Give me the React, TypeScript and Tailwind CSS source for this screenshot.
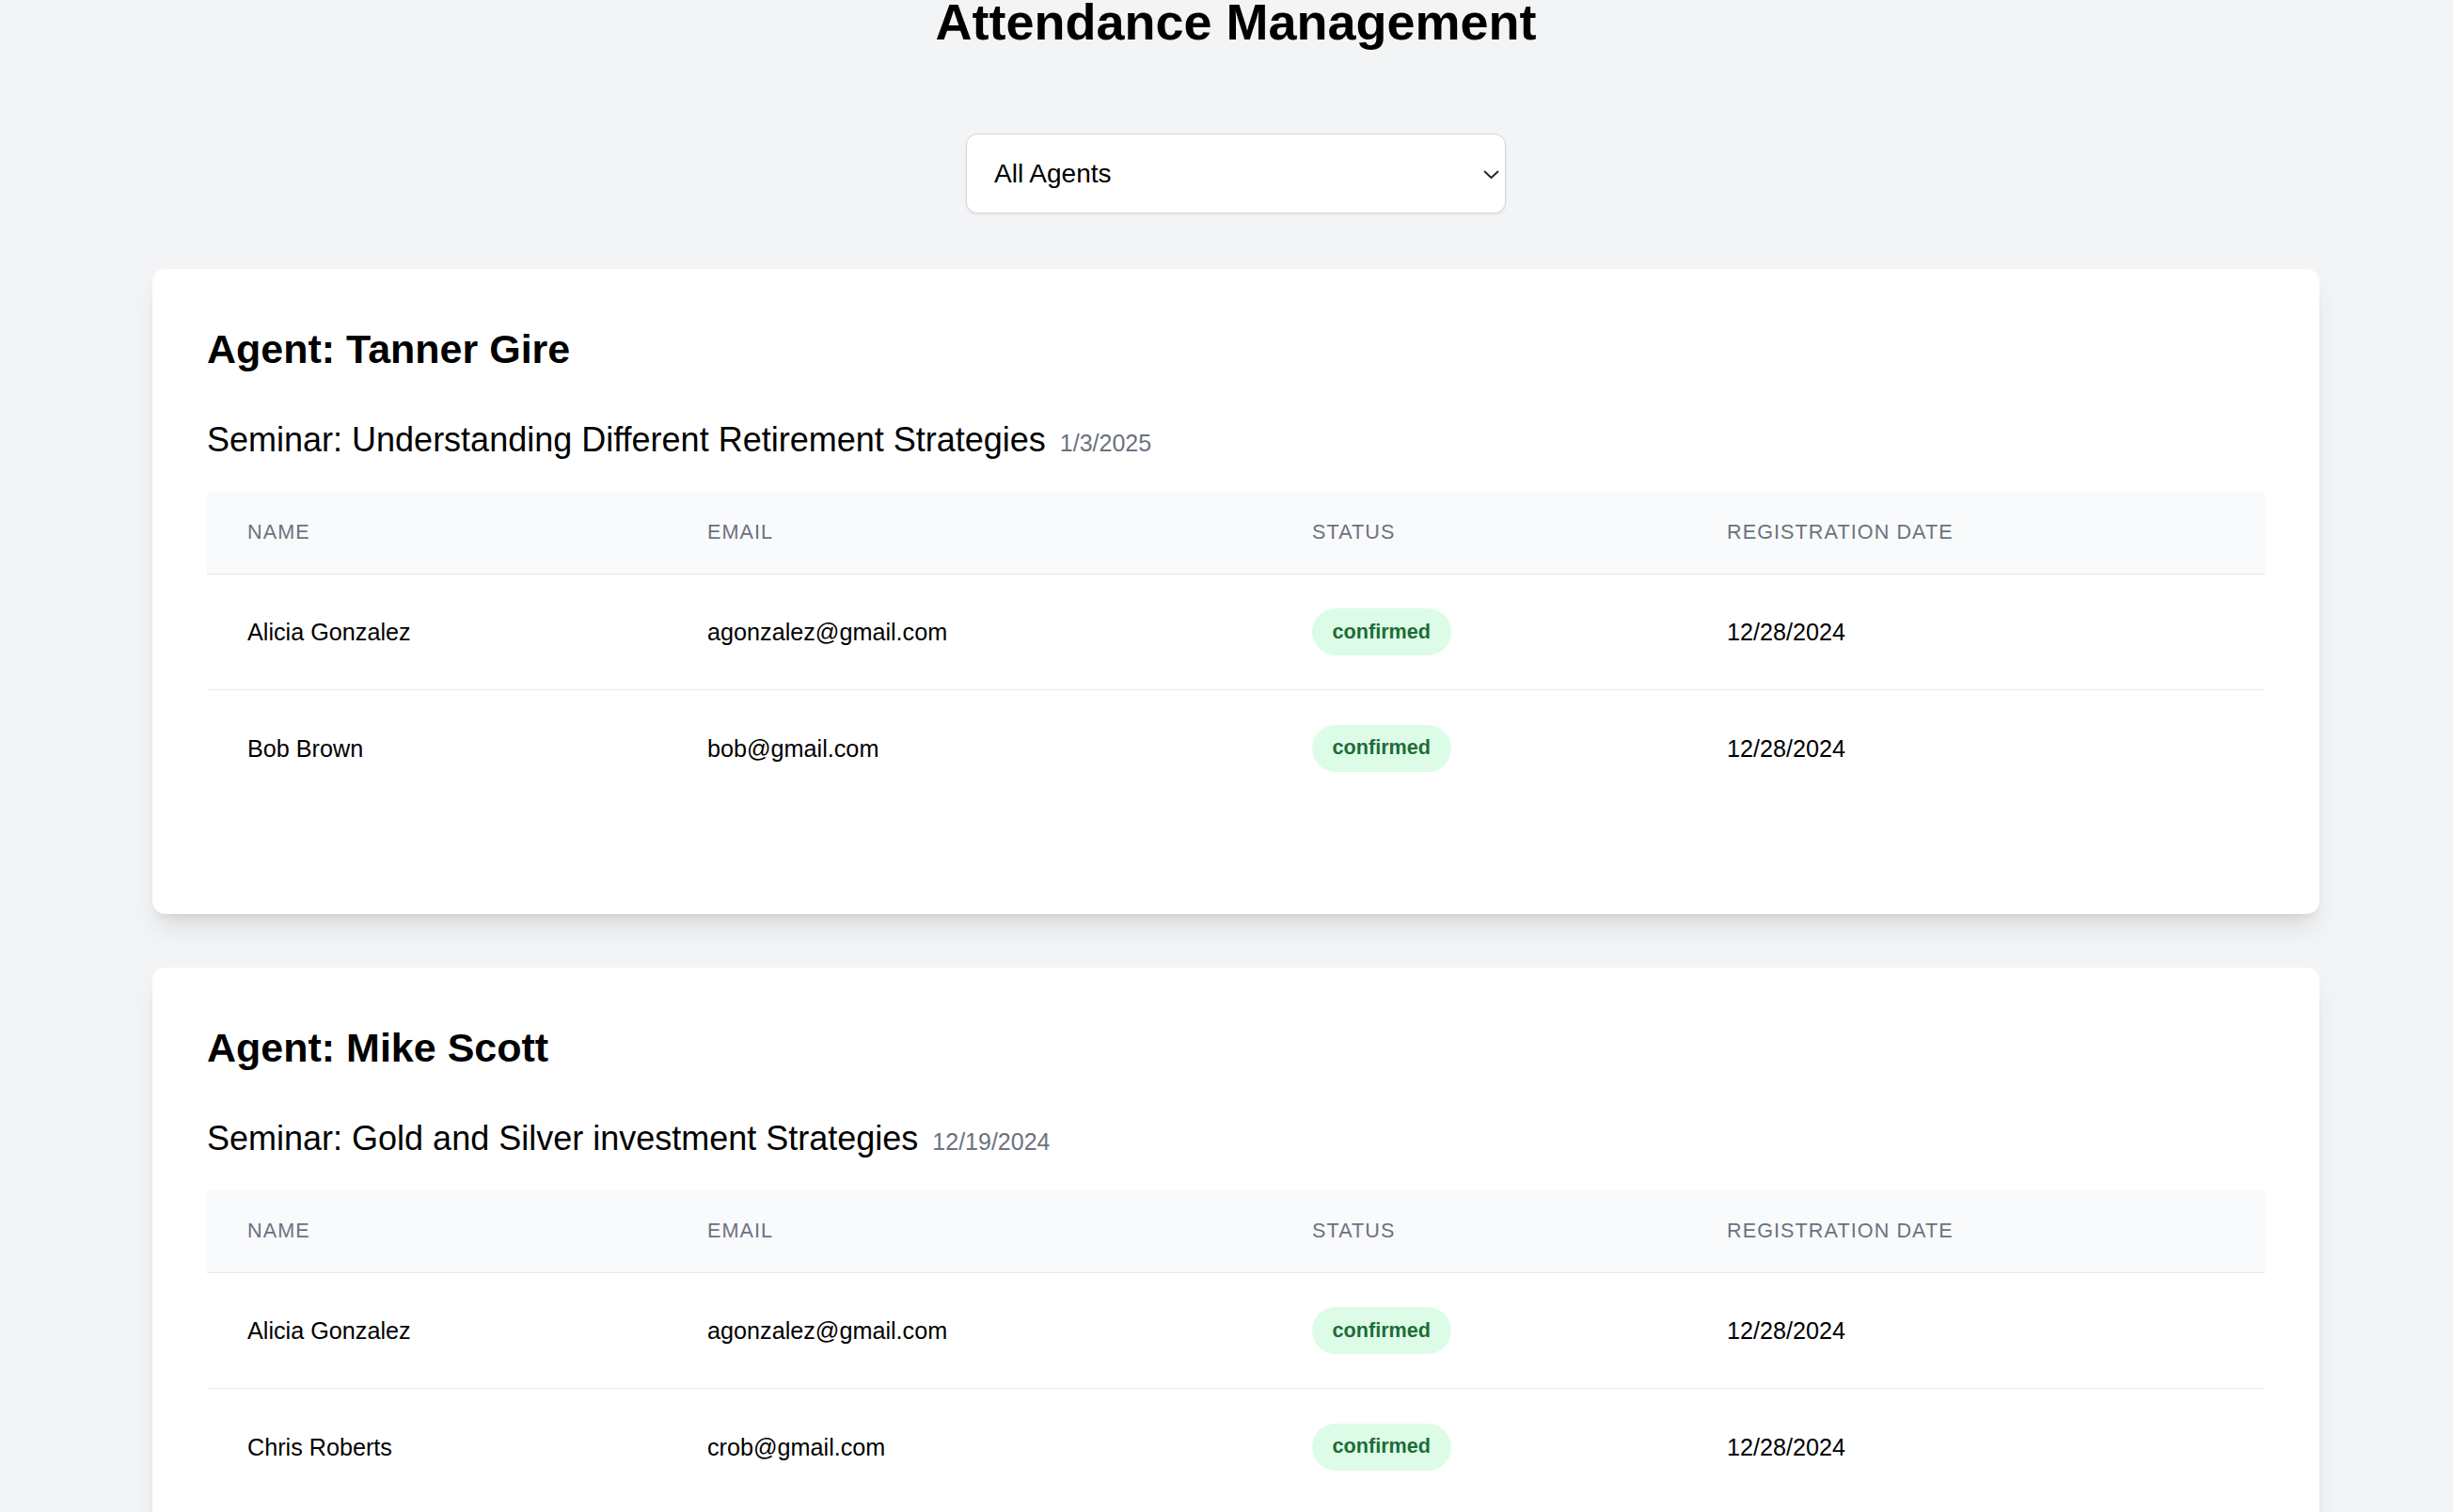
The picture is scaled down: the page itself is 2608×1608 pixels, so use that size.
import React, { useState } from "react";

interface Attendee {
  name: string;
  email: string;
  status: string;
  registered: string;
}

interface AgentGroup {
  agent: string;
  seminar: string;
  date: string;
  attendees: Attendee[];
}

const groups: AgentGroup[] = [
  {
    agent: "Tanner Gire",
    seminar: "Understanding Different Retirement Strategies",
    date: "1/3/2025",
    attendees: [
      { name: "Alicia Gonzalez", email: "agonzalez@gmail.com", status: "confirmed", registered: "12/28/2024" },
      { name: "Bob Brown", email: "bob@gmail.com", status: "confirmed", registered: "12/28/2024" },
    ],
  },
  {
    agent: "Mike Scott",
    seminar: "Gold and Silver investment Strategies",
    date: "12/19/2024",
    attendees: [
      { name: "Alicia Gonzalez", email: "agonzalez@gmail.com", status: "confirmed", registered: "12/28/2024" },
      { name: "Chris Roberts", email: "crob@gmail.com", status: "confirmed", registered: "12/28/2024" },
    ],
  },
];

const cols = "grid grid-cols-[489px_643px_441px_1fr]";

function AgentCard({ group }: { group: AgentGroup }) {
  return (
    <div className="bg-white rounded-[14px] px-[58px] pt-[56px] pb-[58px] mb-[57px] shadow-[0_18px_27px_-5px_rgba(0,0,0,0.1),0_7px_11px_-7px_rgba(0,0,0,0.1)]">
      <h2 className="text-[43px] leading-[58px] font-bold text-black mb-[43px]">
        Agent: {group.agent}
      </h2>

      <div className="mb-[57px]">
        <div className="flex items-baseline h-[50px] mb-[30px]">
          <h3 className="text-[36px] leading-[50px] text-black">
            Seminar: {group.seminar}
          </h3>
          <span className="ml-[15px] text-[25px] text-[#6b7280]">{group.date}</span>
        </div>

        {/* Attendee table */}
        <div>
          <div className={`${cols} h-[88px] items-center bg-[#f9fafb] border-b border-[#e5e7eb]`}>
            {["Name", "Email", "Status", "Registration Date"].map((h) => (
              <div
                key={h}
                className="px-[43px] text-[21.6px] uppercase tracking-wider text-[#6b7280]"
              >
                {h}
              </div>
            ))}
          </div>
          {group.attendees.map((a, i) => (
            <div
              key={i}
              className={`${cols} h-[123px] items-center text-[25.2px] text-black ${
                i < group.attendees.length - 1 ? "border-b border-[#e5e7eb]" : ""
              }`}
            >
              <div className="px-[43px] pt-[2px]">{a.name}</div>
              <div className="px-[43px] pt-[2px]">{a.email}</div>
              <div className="px-[43px]">
                <span className="inline-flex items-center h-[50px] px-[21.6px] rounded-full bg-[#dcfce7] text-[#1f6b36] text-[21.6px] font-bold">
                  {a.status}
                </span>
              </div>
              <div className="px-[43px] pt-[2px]">{a.registered}</div>
            </div>
          ))}
        </div>
      </div>
    </div>
  );
}

export default function App() {
  const [agent, setAgent] = useState("all");

  const shown = agent === "all" ? groups : groups.filter((g) => g.agent === agent);

  return (
    <div className="min-h-screen bg-[#f3f4f6] font-['Liberation_Sans',Arial,sans-serif] overflow-hidden">
      <div className="w-[2304px] ml-[162px]">
        <h1 className="-mt-[9px] text-center text-[54px] leading-[65px] font-bold text-black mb-[86px]">
          Attendance Management
        </h1>

        <div className="relative w-[574px] mx-auto mb-[59px]">
          <select
            value={agent}
            onChange={(e) => setAgent(e.target.value)}
            className="appearance-none w-full h-[85px] pl-[29px] pr-[40px] bg-white border border-[#d1d5db] rounded-[12px] text-[28px] text-black shadow-[0_2px_3px_rgba(0,0,0,0.06)] outline-none"
          >
            <option value="all">All Agents</option>
            {groups.map((g) => (
              <option key={g.agent} value={g.agent}>
                {g.agent}
              </option>
            ))}
          </select>
          <svg
            className="absolute right-[7px] top-[39px] pointer-events-none"
            width="17"
            height="9"
            viewBox="0 0 17 9"
            fill="none"
          >
            <path d="M1 1l7.5 7L16 1" stroke="#1f2937" strokeWidth="2" />
          </svg>
        </div>

        {shown.map((g) => (
          <AgentCard key={g.agent} group={g} />
        ))}
      </div>
    </div>
  );
}
